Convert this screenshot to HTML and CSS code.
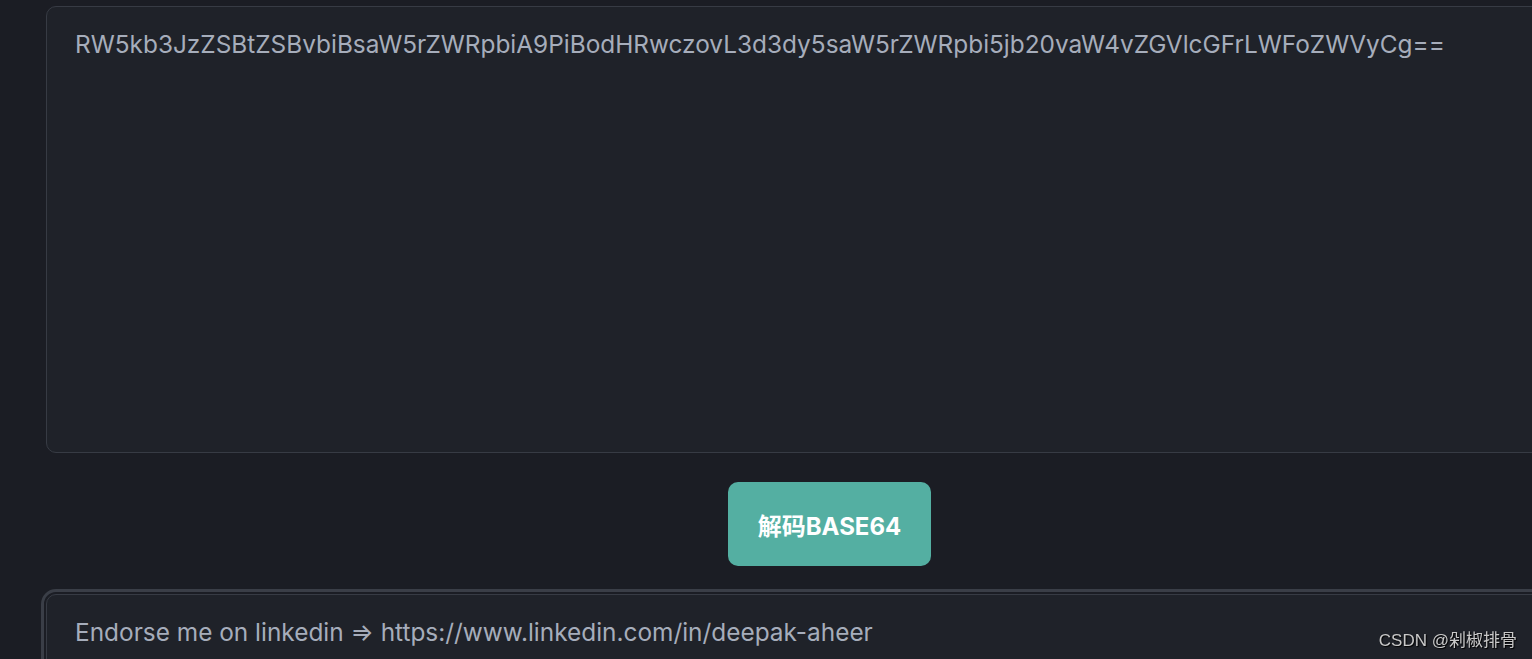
FILE: index.html
```html
<!DOCTYPE html>
<html lang="zh">
<head>
<meta charset="utf-8">
<title>Base64 Decode</title>
<link rel="stylesheet" href="styles.css">
</head>
<body>
<main class="page">
  <textarea class="field field-input">RW5kb3JzZSBtZSBvbiBsaW5rZWRpbiA9PiBodHRwczovL3d3dy5saW5rZWRpbi5jb20vaW4vZGVlcGFrLWFoZWVyCg==</textarea>
  <button class="decode-btn" type="button">解码BASE64</button>
  <textarea class="field field-output">Endorse me on linkedin ⇒ https://www.linkedin.com/in/deepak-aheer</textarea>
</main>
<div class="watermark">CSDN @剁椒排骨</div>
</body>
</html>
```
FILE: styles.css
```css
html, body {
  margin: 0;
  padding: 0;
  background: #1b1d24;
  overflow: hidden;
  height: 100%;
}
.page {
  width: 1567px;
  margin-left: 46px;
  padding-top: 6px;
  display: flex;
  flex-direction: column;
  align-items: center;
  gap: 28px;
}
.field {
  box-sizing: border-box;
  width: 100%;
  height: 447px;
  margin: 0;
  padding: 19px 28px;
  background: #1f2229;
  border: 1px solid #373b44;
  border-radius: 10px;
  color: #a6adbb;
  font-family: Inter, "Noto Sans", "Noto Sans CJK SC", sans-serif;
  font-size: 24.4px;
  line-height: 36px;
  resize: none;
  overflow: hidden;
  flex: none;
}
.field-output {
  outline: 3px solid #3a3e47;
  outline-offset: 2px;
}
.decode-btn {
  width: 203px;
  height: 84px;
  border: none;
  border-radius: 10px;
  background: #54afa2;
  color: #ffffff;
  font-family: Inter, "Noto Sans CJK SC", sans-serif;
  font-weight: 700;
  font-size: 24px;
  flex: none;
  margin-top: 1px;
}
.watermark {
  position: fixed;
  right: 15px;
  bottom: 8px;
  color: #c9c9c9;
  font-family: "Liberation Sans", "Noto Sans CJK SC", sans-serif;
  font-size: 17px;
  text-shadow: 1px 1px 1px #000;
}
```
